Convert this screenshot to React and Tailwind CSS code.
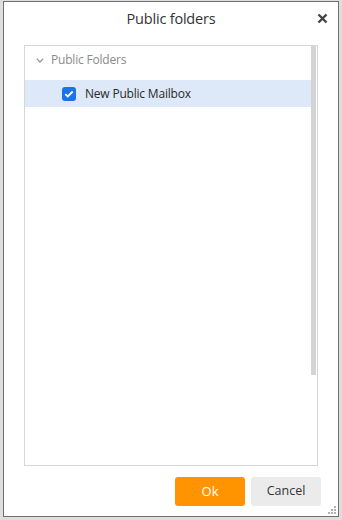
import React from "react";

export default function App() {
  return (
    <div
      className="w-[342px] h-[520px] bg-[#dedede] pt-[1px] pl-[3px]"
      style={{ fontFamily: '"Open Sans", "Noto Sans", sans-serif' }}
    >
      <div className="relative w-[336px] h-[516px] bg-white border border-[#707070] flex flex-col">
        <div className="relative h-[34px] flex items-center justify-center">
          <span className="text-[14.5px] text-[#333] leading-none mt-[1px] tracking-[-0.2px]">Public folders</span>
          <svg
            className="absolute right-[10px] top-[11px]"
            width="11"
            height="11"
            viewBox="0 0 11 11"
          >
            <path d="M1.5 1.5 L9.5 9.5 M9.5 1.5 L1.5 9.5" stroke="#444" strokeWidth="2.4" strokeLinecap="butt" />
          </svg>
        </div>
        <div className="mx-[20px] mt-[9px] h-[421px] border border-[#d6d6d6] flex">
          <div className="flex-1 flex flex-col">
            <div className="h-[28px] mb-[6px] flex items-center pl-[11px]">
              <svg width="8" height="5" viewBox="0 0 8 5" className="mr-[7px]">
                <path d="M0.8 0.8 L4 4 L7.2 0.8" stroke="#9a9a9a" strokeWidth="1.3" fill="none" />
              </svg>
              <span className="text-[12px] tracking-[-0.2px] text-[#8a8a8a]">Public Folders</span>
            </div>
            <div className="h-[27px] bg-[#dde9f8] flex items-center pl-[37px]">
              <div className="w-[14px] h-[14px] rounded-[3px] bg-[#1a73e8] flex items-center justify-center mr-[9px]">
                <svg width="10" height="8" viewBox="0 0 10 8">
                  <path d="M1.3 4.2 L3.8 6.5 L8.7 1.5" stroke="white" strokeWidth="1.8" fill="none" />
                </svg>
              </div>
              <span className="text-[12px] tracking-[-0.2px] text-[#2a2a2a]">New Public Mailbox</span>
            </div>
          </div>
          <div className="w-[5px] mr-[1px] flex flex-col">
            <div className="h-[329px] bg-[#d4d4d4]" />
          </div>
        </div>
        <div className="flex justify-end gap-[6px] mt-[11px] mr-[17px]">
          <button className="w-[70px] h-[29px] rounded-[3px] bg-[#ff9400] text-white text-[13px]">Ok</button>
          <button className="w-[70px] h-[29px] rounded-[3px] bg-[#ebebeb] text-[#333] text-[12.5px]">Cancel</button>
        </div>
        <svg className="absolute right-[2px] bottom-[2px]" width="8" height="8" viewBox="0 0 8 8">
          <rect x="6" y="0" width="2" height="2" fill="#b0b0b0" />
          <rect x="3" y="3" width="2" height="2" fill="#b0b0b0" />
          <rect x="6" y="3" width="2" height="2" fill="#b0b0b0" />
          <rect x="0" y="6" width="2" height="2" fill="#b0b0b0" />
          <rect x="3" y="6" width="2" height="2" fill="#b0b0b0" />
          <rect x="6" y="6" width="2" height="2" fill="#b0b0b0" />
        </svg>
      </div>
    </div>
  );
}
